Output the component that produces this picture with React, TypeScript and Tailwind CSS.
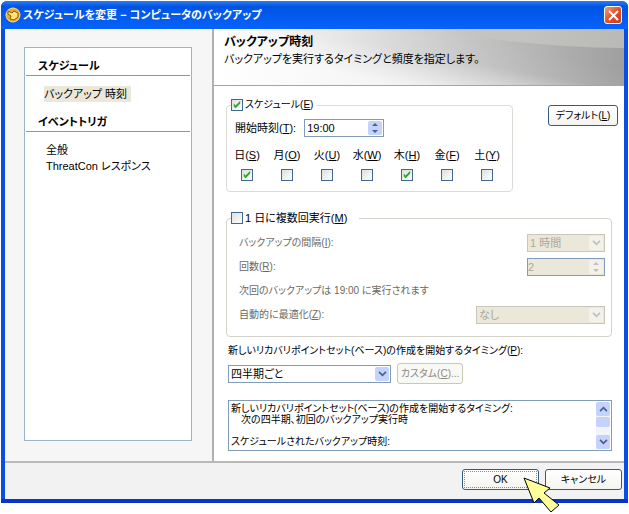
import { useState } from 'react';
import type { ReactNode } from 'react';
import clsx from 'clsx';

const DAYS = [
  { label: '日', mnemonic: 'S', on: true },
  { label: '月', mnemonic: 'O', on: false },
  { label: '火', mnemonic: 'U', on: false },
  { label: '水', mnemonic: 'W', on: false },
  { label: '木', mnemonic: 'H', on: true },
  { label: '金', mnemonic: 'F', on: false },
  { label: '土', mnemonic: 'Y', on: false },
];

const SUMMARY = [
  '新しいリカバリポイントセット(ベース)の作成を開始するタイミング:',
  '\u3000次の四半期、初回のバックアップ実行時',
  '',
  'スケジュールされたバックアップ時刻:',
].join('\n');

function Mnemonic({ text, char, suffix = '' }: { text: string; char: string; suffix?: string }) {
  return (
    <span className="whitespace-nowrap">
      {text}(<u>{char}</u>){suffix}
    </span>
  );
}

function CheckBox({
  id,
  checked,
  onChange,
}: {
  id: string;
  checked: boolean;
  onChange: (value: boolean) => void;
}) {
  return (
    <span className="grid size-3 shrink-0">
      <input
        id={id}
        type="checkbox"
        checked={checked}
        onChange={(e) => onChange(e.target.checked)}
        className="col-start-1 row-start-1 size-3 appearance-none border border-[#42698f] bg-linear-to-br from-[#dcdfe0] to-white"
      />
      {checked && (
        <svg viewBox="0 0 13 13" className="pointer-events-none col-start-1 row-start-1 size-3">
          <path d="M3 5v3l2 2 5-5V2L5 7z" fill="#2fa52f" />
        </svg>
      )}
    </span>
  );
}

function Chevron({ up = false }: { up?: boolean }) {
  return (
    <svg viewBox="0 0 10 7" className={clsx('h-[6px] w-[9px]', up && 'rotate-180')}>
      <path d="M1 1l4 4 4-4" fill="none" stroke="currentColor" strokeWidth="2" />
    </svg>
  );
}

function ArrowBox({ spin = false, disabled = false }: { spin?: boolean; disabled?: boolean }) {
  return (
    <span
      className={clsx(
        'm-px flex w-[14px] shrink-0 items-center justify-center rounded-xs',
        disabled ? 'bg-[#f3f2ea] text-[#c3c1b4]' : 'bg-[#c3d3fd] text-[#4d6185]'
      )}
    >
      {spin ? (
        <svg viewBox="0 0 8 12" className="h-3 w-2">
          <path d="M1 4l3-3 3 3zM1 8l3 3 3-3z" fill="currentColor" />
        </svg>
      ) : (
        <Chevron />
      )}
    </span>
  );
}

function Select({
  id,
  options,
  disabled = false,
  className,
}: {
  id: string;
  options: string[];
  disabled?: boolean;
  className: string;
}) {
  return (
    <span
      className={clsx(
        'flex h-[18px] border',
        disabled ? 'border-[#c9c7ba] bg-[#ebe8d9] text-[#aca899]' : 'border-[#7f9db9] bg-white',
        className
      )}
    >
      <select
        id={id}
        disabled={disabled}
        className="min-w-0 flex-1 appearance-none pl-0.5 text-[11px] leading-4 opacity-100 outline-none"
      >
        {options.map((option) => (
          <option key={option}>{option}</option>
        ))}
      </select>
      <ArrowBox disabled={disabled} />
    </span>
  );
}

function Button({
  children,
  disabled = false,
  className,
}: {
  children: ReactNode;
  disabled?: boolean;
  className: string;
}) {
  return (
    <button
      type="button"
      disabled={disabled}
      className={clsx(
        'flex h-[21px] shrink-0 items-center justify-center rounded-[3px] border',
        disabled
          ? 'border-[#c9c7ba] bg-[#f8f8f4] text-[#8d8b80]'
          : 'border-[#335c83] bg-linear-to-b from-white to-[#f4f4ef]',
        className
      )}
    >
      {children}
    </button>
  );
}

function TitleBar() {
  return (
    <header className="flex h-7 items-center gap-0.5 rounded-t-md bg-linear-to-b from-[#2b7cf5] via-[#0054e3] via-20% to-[#0663fb] pr-1.5 pl-1 text-white">
      <svg viewBox="0 0 16 16" className="size-4 shrink-0">
        <circle cx="8" cy="8" r="7" fill="#f3a823" stroke="#fbe08a" />
        <path
          d="M3 4l4 2 2-2 4 2v4l-4 3-4-1 1-3-3-2z"
          fill="#ffe37a"
          stroke="#8a5a08"
          strokeLinejoin="round"
        />
      </svg>
      <h1 className="flex-1 truncate text-[11px] font-bold">
        スケジュールを変更 − コンピュータのバックアップ
      </h1>
      <button
        type="button"
        aria-label="閉じる"
        className="flex size-[18px] items-center justify-center rounded-[3px] border border-white bg-linear-to-br from-[#f09a80] via-[#e0502c] to-[#c63c18]"
      >
        <svg viewBox="0 0 11 11" className="size-[11px]">
          <path d="M1 1l9 9M10 1l-9 9" stroke="#fff" strokeWidth="2" />
        </svg>
      </button>
    </header>
  );
}

function Sidebar() {
  return (
    <aside className="flex w-[209px] shrink-0 border-r-2 border-[#b0b0b0] bg-[#f6f6f6] pt-[18px] pr-5 pb-5 pl-[19px] text-[11px]">
      <nav className="flex-1 border border-[#9db3c9] bg-white px-px pt-2.5">
        <h2 className="border-b border-[#7d97c5] pl-3 leading-[17px] font-bold">スケジュール</h2>
        <ul className="pt-2.5 pb-3 pl-[18px] leading-4">
          <li>
            <a href="#time" className="inline-block bg-[#ebe8d9] pr-1">
              バックアップ 時刻
            </a>
          </li>
        </ul>
        <h2 className="border-b border-[#7d97c5] pl-3 leading-[17px] font-bold">イベントトリガ</h2>
        <ul className="pt-2.5 pl-5 leading-4">
          <li>
            <a href="#general">全般</a>
          </li>
          <li>
            <a href="#threatcon">ThreatCon レスポンス</a>
          </li>
        </ul>
      </nav>
    </aside>
  );
}

function Banner() {
  return (
    <div className="relative h-[57px] border-b border-[#a5a5a5] bg-white pt-[5px] pl-2.5">
      <svg
        viewBox="0 0 410 56"
        preserveAspectRatio="none"
        className="absolute inset-0 size-full"
        aria-hidden="true"
      >
        <defs>
          <linearGradient id="across" x1="0" x2="1">
            <stop offset="0" stopColor="#fff" />
            <stop offset=".3" stopColor="#e6e6e6" />
            <stop offset="1" stopColor="#9f9f9f" />
          </linearGradient>
          <linearGradient id="fade" gradientUnits="userSpaceOnUse" x1="200" y1="0" x2="190" y2="56">
            <stop offset="0" stopColor="#fff" stopOpacity="0" />
            <stop offset=".4" stopColor="#fff" stopOpacity=".05" />
            <stop offset="1" stopColor="#fff" stopOpacity=".7" />
          </linearGradient>
          <linearGradient id="band" x1="0" x2="1">
            <stop offset="0" stopColor="#c4c4c2" stopOpacity="0" />
            <stop offset=".4" stopColor="#c4c4c2" />
            <stop offset="1" stopColor="#b9b9b6" />
          </linearGradient>
        </defs>
        <path d="M0 0h410v56H0z" fill="url(#across)" />
        <path d="M0 0h410v56H0z" fill="url(#fade)" />
        <path d="M215 0Q310 18 410 19V0z" fill="url(#band)" />
      </svg>
      <div className="relative">
        <h2 className="text-xs leading-[17px] font-bold">バックアップ時刻</h2>
        <p className="text-[11px] leading-4">
          バックアップを実行するタイミングと頻度を指定します。
        </p>
      </div>
    </div>
  );
}

function ScheduleGroup() {
  const [enabled, setEnabled] = useState(true);
  const [days, setDays] = useState(DAYS.map((day) => day.on));

  return (
    <fieldset className="w-[287px] rounded border border-[#dcdcd6] px-2 pb-2.5">
      <legend className="-ml-1 flex h-4 items-center gap-0.5 bg-white pr-1">
        <CheckBox id="schedule" checked={enabled} onChange={setEnabled} />
        <label htmlFor="schedule">
          <Mnemonic text="スケジュール" char="E" />
        </label>
      </legend>
      <div className="flex items-center gap-2 pt-1.5 text-[11px]">
        <label htmlFor="start">
          <Mnemonic text="開始時刻" char="T" suffix=":" />
        </label>
        <span className="flex h-[18px] w-20 border border-[#7f9db9]">
          <input
            id="start"
            defaultValue="19:00"
            className="min-w-0 flex-1 pl-0.5 text-[11px] outline-none"
          />
          <ArrowBox spin />
        </span>
      </div>
      <div className="flex gap-4 pt-2.5 text-[11px]">
        {DAYS.map((day, i) => (
          <div key={day.label} className="flex w-6 flex-col items-center gap-1.5">
            <label htmlFor={`day-${i}`}>
              <Mnemonic text={day.label} char={day.mnemonic} />
            </label>
            <CheckBox
              id={`day-${i}`}
              checked={days[i]}
              onChange={(value) => setDays(days.map((d, n) => (n === i ? value : d)))}
            />
          </div>
        ))}
      </div>
    </fieldset>
  );
}

function RepeatGroup() {
  const [enabled, setEnabled] = useState(false);

  return (
    <fieldset className="rounded border border-[#d3d3cc] pr-1.5 pb-3 pl-3">
      <legend className="-ml-2 flex h-4 items-center gap-0.5 bg-white pr-3 text-[11px]">
        <CheckBox id="repeat" checked={enabled} onChange={setEnabled} />
        <label htmlFor="repeat">
          <Mnemonic text="1 日に複数回実行" char="M" />
        </label>
      </legend>
      <div className="flex flex-col gap-1.5 pt-2 text-[#6b6962]">
        <div className="flex items-center justify-between">
          <label htmlFor="interval">
            <Mnemonic text="バックアップの間隔" char="I" suffix=":" />
          </label>
          <Select id="interval" options={['1 時間']} disabled={!enabled} className="w-[78px]" />
        </div>
        <div className="flex items-center justify-between">
          <label htmlFor="count">
            <Mnemonic text="回数" char="R" suffix=":" />
          </label>
          <span className="flex h-[18px] w-[78px] border border-[#7f9db9] bg-[#ebe8d9] text-[#aca899]">
            <input
              id="count"
              defaultValue="2"
              disabled={!enabled}
              className="min-w-0 flex-1 text-[11px] outline-none"
            />
            <ArrowBox spin disabled={!enabled} />
          </span>
        </div>
        <p className="leading-[18px]">次回のバックアップは 19:00 に実行されます</p>
        <div className="flex items-center justify-between">
          <label htmlFor="optimize">
            <Mnemonic text="自動的に最適化" char="Z" suffix=":" />
          </label>
          <Select id="optimize" options={['なし']} disabled={!enabled} className="w-[129px]" />
        </div>
      </div>
    </fieldset>
  );
}

function Summary() {
  return (
    <div className="flex h-[51px] border border-[#7f9db9] bg-white">
      <textarea
        readOnly
        aria-label="スケジュールの概要"
        value={SUMMARY}
        className="min-w-0 flex-1 resize-none overflow-hidden pt-0.5 pl-0.5 leading-[11px] outline-none"
      />
      <div className="m-px flex w-[14px] flex-col gap-px bg-[#f3f3fb] text-[#4d6185]">
        <button
          type="button"
          aria-label="上へ"
          className="flex h-[14px] items-center justify-center rounded-xs bg-[#c3d3fd]"
        >
          <Chevron up />
        </button>
        <span className="h-2.5 rounded-xs bg-[#c3d3fd]" />
        <button
          type="button"
          aria-label="下へ"
          className="mt-auto flex h-[14px] items-center justify-center rounded-xs bg-[#c3d3fd]"
        >
          <Chevron />
        </button>
      </div>
    </div>
  );
}

export default function App() {
  return (
    <div className="bg-white p-px pb-3 font-['Liberation_Sans','Noto_Sans_CJK_JP',sans-serif] text-[10px] leading-4 text-black [font-feature-settings:'palt']">
      <main className="rounded-t-md border-b-4 border-[#0a36c8] bg-[#0a4fe0]">
        <TitleBar />
        <div className="mx-1 flex">
          <Sidebar />
          <section className="min-w-0 flex-1 bg-white">
            <Banner />
            <div className="px-3 pt-[11px] pb-2.5">
              <div className="-mr-1.5 flex items-start justify-between">
                <ScheduleGroup />
                <Button className="mt-2 w-[70px]">
                  <Mnemonic text="デフォルト" char="L" />
                </Button>
              </div>
              <div className="pt-[18px]">
                <RepeatGroup />
              </div>
              <div className="pt-1.5 pl-0.5">
                <label htmlFor="base" className="block">
                  <Mnemonic
                    text="新しいリカバリポイントセット(ベース)の作成を開始するタイミング"
                    char="P"
                    suffix=":"
                  />
                </label>
                <div className="flex items-center gap-1.5 pt-1 pb-4">
                  <Select id="base" options={['四半期ごと']} className="w-[163px]" />
                  <Button disabled className="w-[66px]">
                    <Mnemonic text="カスタム" char="C" suffix="..." />
                  </Button>
                </div>
                <Summary />
              </div>
            </div>
          </section>
        </div>
        <footer className="relative mx-1 flex justify-end gap-1.5 border-t-2 border-[#b9b9b9] bg-[#f2f2f2] px-0.5 pt-1.5 pb-[9px]">
          <Button className="w-[77px] outline-1 -outline-offset-3 outline-[#6b8fd0] outline-dotted">
            OK
          </Button>
          <Button className="w-[77px]">キャンセル</Button>
          <svg viewBox="0 0 37 36" className="absolute top-3.5 right-16 h-9 w-[37px]">
            <path
              d="M1 1l26 10-6 5 15 12-8 7-12-14-5 5z"
              fill="#ffff99"
              stroke="#000"
              strokeLinejoin="round"
            />
          </svg>
        </footer>
      </main>
    </div>
  );
}
